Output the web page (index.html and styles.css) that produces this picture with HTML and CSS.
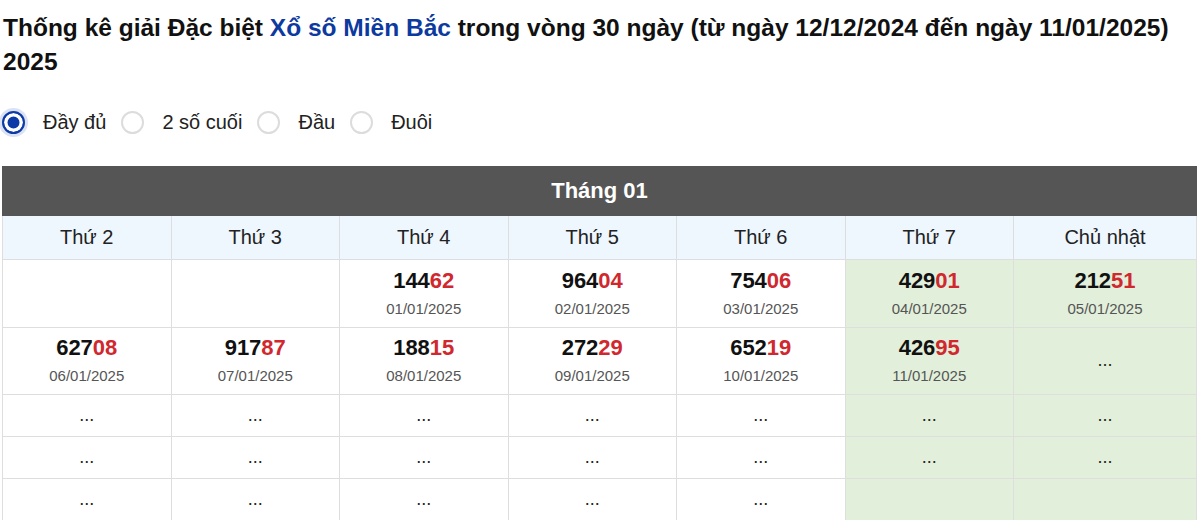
FILE: index.html
```html
<!DOCTYPE html>
<html lang="vi">
<head>
    <meta charset="UTF-8">
    <meta name="viewport" content="width=device-width, initial-scale=1.0">
    <title>Thống kê giải Đặc biệt Xổ số Miền Bắc</title>
    <link rel="stylesheet" href="styles.css">
</head>
<body>
    <div class="page">
        <h1 class="title">Thống kê giải Đặc biệt <span class="title-link">Xổ số Miền Bắc</span> trong vòng 30 ngày (từ ngày 12/12/2024 đến ngày 11/01/2025) 2025</h1>

        <div class="mode-group">
            <label class="mode-item">
                <input type="radio" name="mode" value="full" checked>
                <span class="mode-dot"></span>
                <span class="mode-text">Đầy đủ</span>
            </label>
            <label class="mode-item">
                <input type="radio" name="mode" value="last2">
                <span class="mode-dot"></span>
                <span class="mode-text">2 số cuối</span>
            </label>
            <label class="mode-item">
                <input type="radio" name="mode" value="head">
                <span class="mode-dot"></span>
                <span class="mode-text">Đầu</span>
            </label>
            <label class="mode-item">
                <input type="radio" name="mode" value="tail">
                <span class="mode-dot"></span>
                <span class="mode-text">Đuôi</span>
            </label>
        </div>

        <table class="month-table">
            <colgroup>
                <col class="col-day">
                <col class="col-day">
                <col class="col-day">
                <col class="col-day">
                <col class="col-day">
                <col class="col-day">
                <col>
            </colgroup>
            <thead>
                <tr>
                    <th class="month-title" colspan="7">Tháng 01</th>
                </tr>
                <tr class="day-names">
                    <th>Thứ 2</th>
                    <th>Thứ 3</th>
                    <th>Thứ 4</th>
                    <th>Thứ 5</th>
                    <th>Thứ 6</th>
                    <th>Thứ 7</th>
                    <th>Chủ nhật</th>
                </tr>
            </thead>
            <tbody>
                <tr class="result-row">
                    <td></td>
                    <td></td>
                    <td><div class="num">144<em>62</em></div><div class="date">01/01/2025</div></td>
                    <td><div class="num">964<em>04</em></div><div class="date">02/01/2025</div></td>
                    <td><div class="num">754<em>06</em></div><div class="date">03/01/2025</div></td>
                    <td class="weekend"><div class="num">429<em>01</em></div><div class="date">04/01/2025</div></td>
                    <td class="weekend"><div class="num">212<em>51</em></div><div class="date">05/01/2025</div></td>
                </tr>
                <tr class="result-row">
                    <td><div class="num">627<em>08</em></div><div class="date">06/01/2025</div></td>
                    <td><div class="num">917<em>87</em></div><div class="date">07/01/2025</div></td>
                    <td><div class="num">188<em>15</em></div><div class="date">08/01/2025</div></td>
                    <td><div class="num">272<em>29</em></div><div class="date">09/01/2025</div></td>
                    <td><div class="num">652<em>19</em></div><div class="date">10/01/2025</div></td>
                    <td class="weekend"><div class="num">426<em>95</em></div><div class="date">11/01/2025</div></td>
                    <td class="weekend dots">...</td>
                </tr>
                <tr class="empty-row">
                    <td class="dots">...</td>
                    <td class="dots">...</td>
                    <td class="dots">...</td>
                    <td class="dots">...</td>
                    <td class="dots">...</td>
                    <td class="weekend dots">...</td>
                    <td class="weekend dots">...</td>
                </tr>
                <tr class="empty-row">
                    <td class="dots">...</td>
                    <td class="dots">...</td>
                    <td class="dots">...</td>
                    <td class="dots">...</td>
                    <td class="dots">...</td>
                    <td class="weekend dots">...</td>
                    <td class="weekend dots">...</td>
                </tr>
                <tr class="empty-row">
                    <td class="dots">...</td>
                    <td class="dots">...</td>
                    <td class="dots">...</td>
                    <td class="dots">...</td>
                    <td class="dots">...</td>
                    <td class="weekend"></td>
                    <td class="weekend"></td>
                </tr>
            </tbody>
        </table>
    </div>
</body>
</html>
```

FILE: styles.css
```css
body {
    margin: 0;
    font-family: "Liberation Sans", Arial, sans-serif;
    color: #111;
    background-color: #fff;
}

.page {
    padding: 0 3px 0 2px;
}

.title {
    margin: 0;
    padding: 11px 0 0 1px;
    font-size: 24.5px;
    line-height: 34px;
    font-weight: bold;
    color: #111;
}

.title-link {
    color: #0d3a9f;
}

.mode-group {
    display: flex;
    align-items: center;
    gap: 15px;
    margin: 24px 0 0 0;
    height: 38px;
}

.mode-item {
    display: flex;
    align-items: center;
    gap: 18px;
    cursor: pointer;
}

.mode-item input {
    display: none;
}

.mode-dot {
    width: 23px;
    height: 23px;
    border: 2px solid #dcdcdc;
    border-radius: 50%;
    box-sizing: border-box;
}

.mode-item input:checked + .mode-dot {
    border: 2px solid #0d3aa9;
    background-color: #0d3aa9;
    box-shadow: inset 0 0 0 3.5px #fff, 0 0 0 3px rgba(13, 58, 169, 0.15);
}

.mode-text {
    font-size: 20px;
    color: #222;
}

.month-table {
    width: 100%;
    margin-top: 25px;
    border-collapse: collapse;
    table-layout: fixed;
}

.col-day {
    width: 168.5px;
}

.month-table th,
.month-table td {
    border: 1px solid #dedede;
    text-align: center;
    padding: 0;
}

.month-title {
    height: 48px;
    background-color: #555;
    color: #fff;
    font-size: 22px;
    font-weight: bold;
}

.month-table th.month-title {
    border-color: #555;
}

.day-names th {
    height: 43px;
    background-color: #eef6fe;
    color: #222;
    font-size: 20px;
    font-weight: normal;
}

.result-row td {
    height: 66.6px;
}

.empty-row td {
    height: 41px;
}

.weekend {
    background-color: #e2efda;
}

.num {
    font-size: 22px;
    font-weight: bold;
    line-height: 26px;
    color: #111;
}

.num em {
    font-style: normal;
    color: #d0282e;
}

.date {
    margin-top: 5px;
    font-size: 15px;
    line-height: 20px;
    color: #555;
}

.dots {
    font-size: 18px;
    color: #222;
}
```
